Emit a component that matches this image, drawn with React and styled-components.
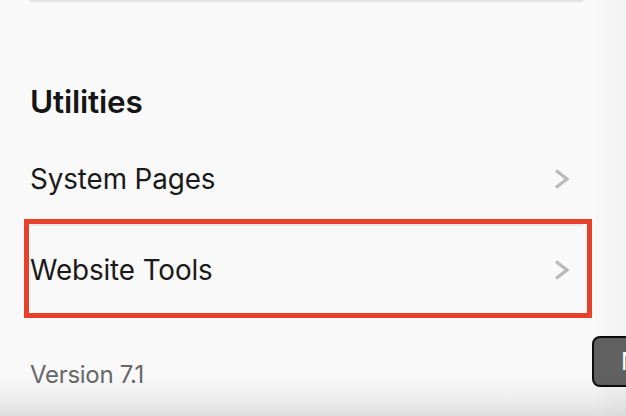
import React from "react";
import styled, { createGlobalStyle } from "styled-components";

const Global = createGlobalStyle`
  html, body { margin: 0; padding: 0; height: 100%; overflow: hidden; }
  body { background: #f9f9f9; font-family: Inter, "Noto Sans", "Liberation Sans", sans-serif; }
  #root { height: 100%; }
`;

const Screen = styled.div`
  position: relative;
  width: 626px;
  height: 416px;
  overflow: hidden;
  background: linear-gradient(to right, #f9f9f9 0, #f9f9f9 592px, #f4f4f4 612px, #f3f3f3 100%);
  &::after {
    content: "";
    position: absolute;
    left: 0;
    right: 0;
    bottom: 0;
    height: 40px;
    pointer-events: none;
    background: linear-gradient(to bottom, rgba(0,0,0,0) 0%, rgba(0,0,0,0.05) 60%, rgba(0,0,0,0.1) 100%);
  }
`;

const Panel = styled.div`
  width: 553px;
  margin-left: 30px;
  display: flex;
  flex-direction: column;
`;

const TopRule = styled.div`
  height: 2px;
  background: #e3e3e3;
`;

const Heading = styled.h2`
  margin: 80px 0 0;
  font-size: 31.5px;
  font-weight: 600;
  line-height: 40px;
  color: #151515;
  letter-spacing: -0.2px;
  height: 52px;
`;

const List = styled.div`
  display: flex;
  flex-direction: column;
`;

const Row = styled.div`
  position: relative;
  height: ${p => (p.$divider ? 88 : 90)}px;
  display: flex;
  align-items: center;
  justify-content: space-between;
  padding-right: 14px;
  border-top: ${p => (p.$divider ? "2px solid #e8e8e8" : "none")};
`;

const Label = styled.span`
  font-size: 27.8px;
  color: #1a1a1a;
  letter-spacing: -0.1px;
`;

const Highlight = styled.div`
  position: absolute;
  left: -6px;
  right: -9px;
  top: -7px;
  bottom: -4px;
  border: 5px solid #e8412b;
  pointer-events: none;
`;

const Version = styled.div`
  margin-top: 46px;
  font-size: 24px;
  color: #676767;
  letter-spacing: -0.3px;
`;

const HelpButton = styled.div`
  position: absolute;
  left: 592px;
  top: 336px;
  height: 51px;
  width: 160px;
  box-sizing: border-box;
  border: 2px solid #0c0c0c;
  border-radius: 8px;
  background: #606060;
  color: #fff;
  font-size: 24px;
  display: flex;
  align-items: center;
  padding-left: 27px;
`;

const Chevron = () => (
  <svg width="15" height="20" viewBox="0 0 15 20">
    <polyline points="2,1.5 13,10 2,18.5" fill="none" stroke="#b9b9b9" strokeWidth="3.2" />
  </svg>
);

export default function App() {
  return (
    <>
      <Global />
      <Screen>
        <Panel>
          <TopRule />
          <Heading>Utilities</Heading>
          <List>
            <Row>
              <Label>System Pages</Label>
              <Chevron />
            </Row>
            <Row $divider>
              <Label>Website Tools</Label>
              <Chevron />
              <Highlight />
            </Row>
          </List>
          <Version>Version 7.1</Version>
        </Panel>
        <HelpButton>Need help?</HelpButton>
      </Screen>
    </>
  );
}
